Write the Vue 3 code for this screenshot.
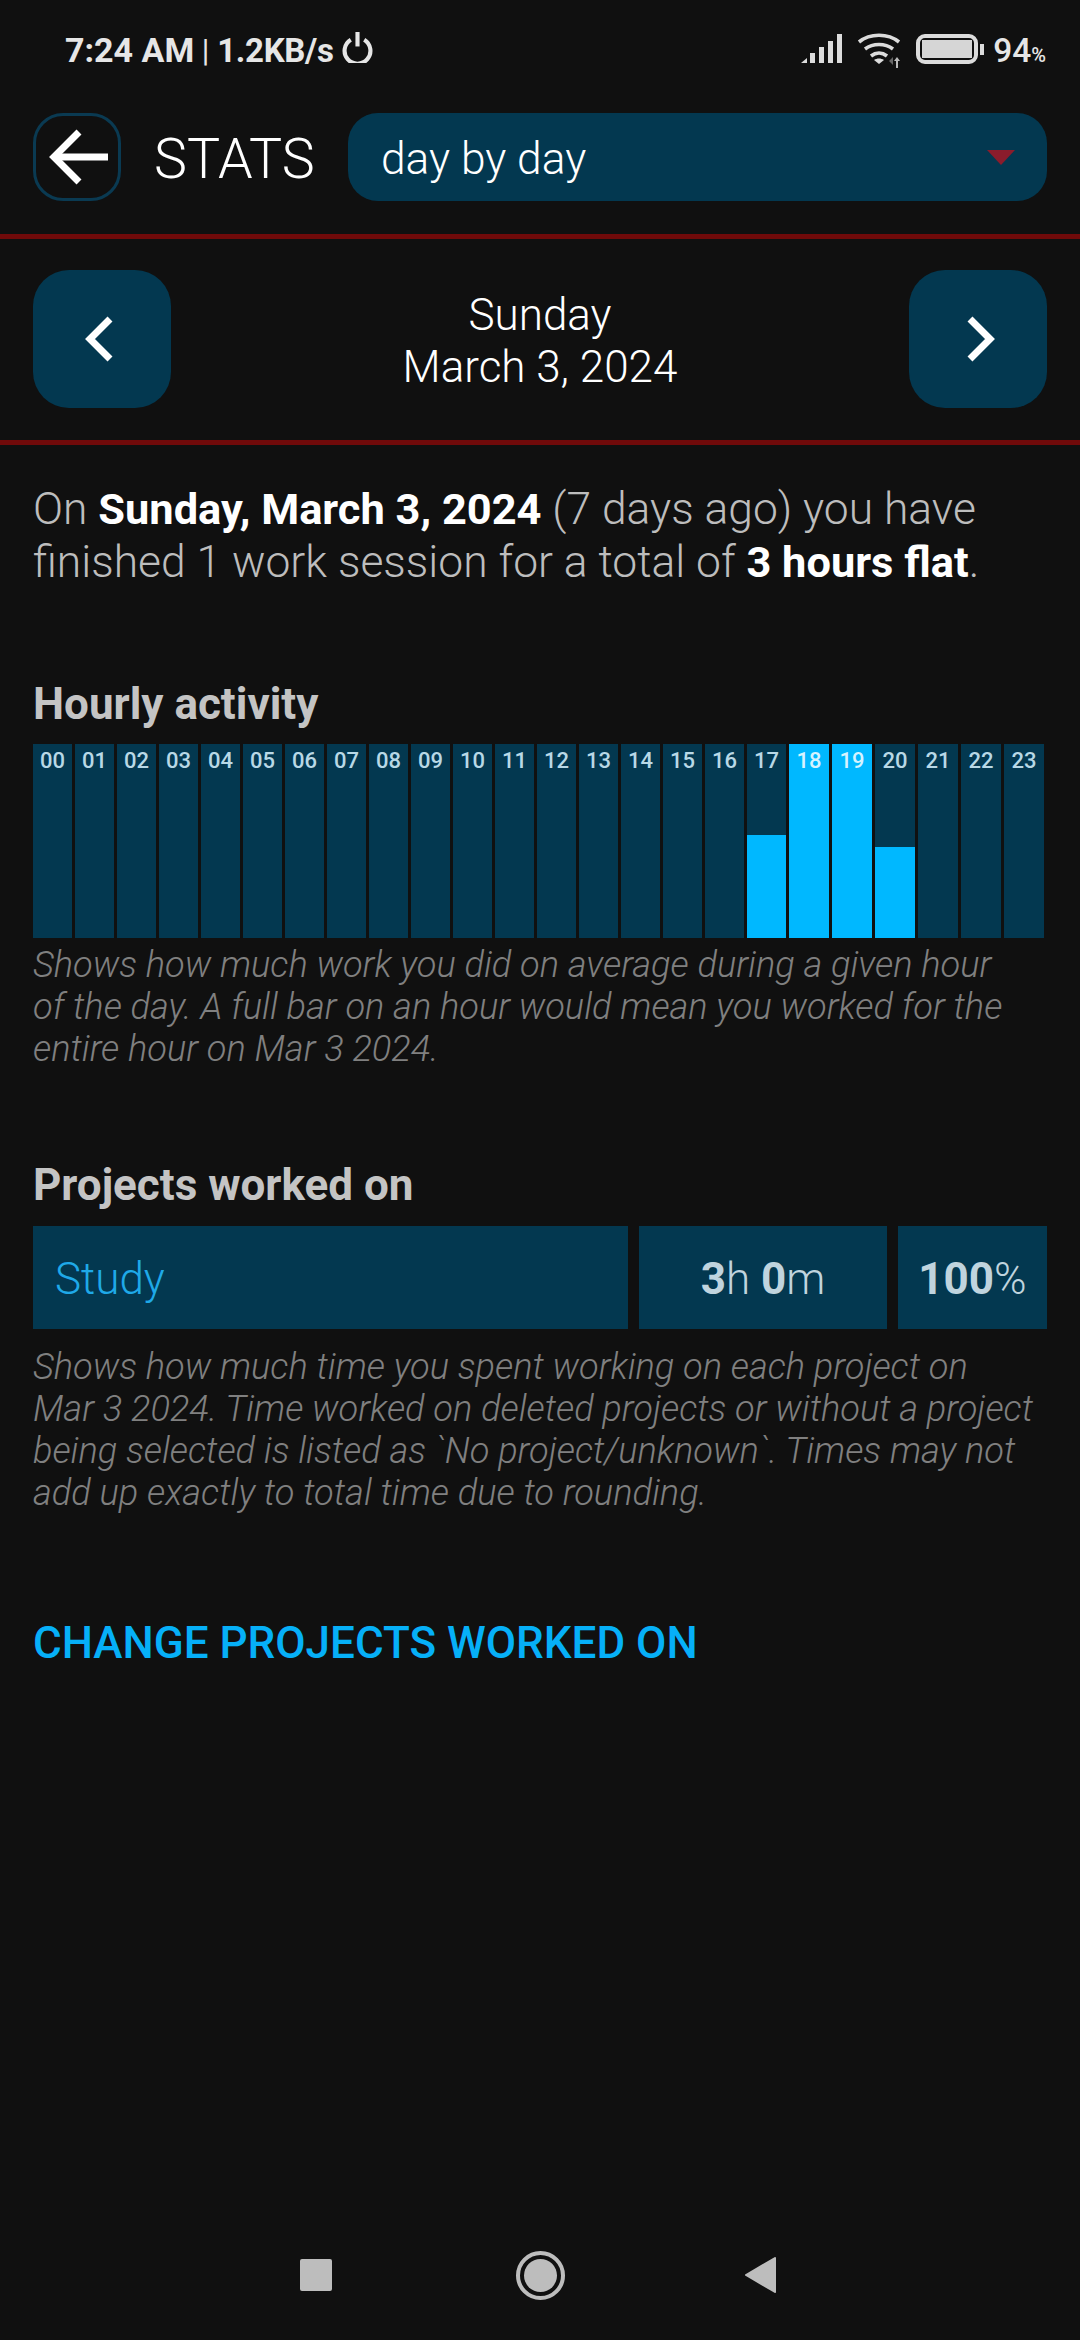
<script setup>
const hours = Array.from({ length: 24 }, (_, i) => ({
  label: String(i).padStart(2, '0'),
  fill: { 17: 53, 18: 100, 19: 100, 20: 47 }[i] || 0,
}))
</script>

<template>
  <div class="screen">
    <div class="status">
      <div class="status-left">
        <span class="clock">7:24 AM</span><span class="sep"> | </span><span class="speed">1.2KB/s</span>
        <svg class="power" viewBox="0 0 30 30" width="31" height="31"><path d="M8.5 7.5a12.5 12.5 0 1 0 13 0" fill="none" stroke="#e6e6e6" stroke-width="4"/><path d="M15 0v14" stroke="#e6e6e6" stroke-width="4"/></svg>
      </div>
      <div class="status-right">
        <svg class="signal" viewBox="0 0 41 30" width="41" height="30" fill="#dcdcdc"><path d="M0 29l6-5v5z"/><rect x="9" y="19" width="5" height="10"/><rect x="18" y="13" width="5" height="16"/><rect x="27" y="7" width="5" height="22"/><rect x="36" y="0" width="5" height="29"/></svg>
        <svg class="wifi" viewBox="0 0 44 36" width="44" height="36" fill="none" stroke="#dcdcdc" stroke-width="3.6">
          <path d="M2 9c11-9 29-9 40 0"/><path d="M8 16c8-6 20-6 28 0"/><path d="M14 23c5-4 11-4 16 0"/>
          <path d="M22 31l-5-4c3-2 7-2 10 0z" fill="#dcdcdc" stroke="none"/>
          <path d="M36 24v8l-4-4z" fill="#666" stroke="none"/>
          <path d="M40 24l3 4h-2v7h-2v-7h-2z" fill="#bbb" stroke="none"/>
        </svg>
        <div class="battery"><div class="battery-fill"></div></div>
        <div class="battery-tip"></div>
        <span class="pct">94<small>%</small></span>
      </div>
    </div>

    <div class="header">
      <button class="back">
        <svg viewBox="0 0 62 62" width="62" height="62" fill="none" stroke="#fff" stroke-width="7"><path d="M62 31H8"/><path d="M33 6L8 31l25 25"/></svg>
      </button>
      <div class="title">STATS</div>
      <div class="select">
        <span class="select-text">day by day</span>
        <svg class="caret" viewBox="0 0 28 15" width="28" height="15"><path d="M0 0h28L14 15z" fill="#8a1c2c"/></svg>
      </div>
    </div>

    <div class="date-nav">
      <button class="nav-btn prev">
        <svg viewBox="0 0 30 48" width="30" height="48" fill="none" stroke="#fff" stroke-width="7"><path d="M26 4L6 24l20 20"/></svg>
      </button>
      <div class="date"><div>Sunday</div><div>March 3, 2024</div></div>
      <button class="nav-btn next">
        <svg viewBox="0 0 30 48" width="30" height="48" fill="none" stroke="#fff" stroke-width="7"><path d="M4 4l20 20L4 44"/></svg>
      </button>
    </div>

    <div class="content">
      <p class="summary">On <b>Sunday, March 3, 2024</b> (7 days ago) you have finished 1 work session for a total of <b>3 hours flat</b>.</p>

      <h2 class="heading first">Hourly activity</h2>
      <div class="chart">
        <div v-for="h in hours" :key="h.label" class="bar">
          <div class="fill" :style="{ height: h.fill + '%' }"></div>
          <span class="bar-label" :class="{ lit: h.fill === 100 }">{{ h.label }}</span>
        </div>
      </div>
      <p class="note note-chart">Shows how much work you did on average during a given hour of the day. A full bar on an hour would mean you worked for the entire hour on Mar 3 2024.</p>

      <h2 class="heading second">Projects worked on</h2>
      <div class="projects">
        <div class="cell name">Study</div>
        <div class="cell time"><b>3</b>h <b>0</b>m</div>
        <div class="cell percent"><b>100</b>%</div>
      </div>
      <p class="note note-projects">Shows how much time you spent working on each project on Mar 3 2024. Time worked on deleted projects or without a project being selected is listed as `No project/unknown`. Times may not add up exactly to total time due to rounding.</p>

      <div class="change">CHANGE PROJECTS WORKED ON</div>
    </div>

    <div class="navbar">
      <div class="nav-square"></div>
      <div class="nav-circle"><div></div></div>
      <svg viewBox="0 0 32 38" width="32" height="38"><path d="M31 2L2 19l29 17z" fill="#bdbdbd" stroke="#bdbdbd" stroke-width="2" stroke-linejoin="round"/></svg>
    </div>
  </div>
</template>

<style>
html, body { margin: 0; background: #101010; }
</style>

<style scoped>
.screen {
  width: 1080px; height: 2340px; background: #101010; color: #fff;
  font-family: Roboto, "Liberation Sans", sans-serif;
  display: flex; flex-direction: column; overflow: hidden;
}
button { border: 0; padding: 0; display: flex; align-items: center; justify-content: center; }

.status { height: 113px; box-sizing: border-box; padding: 30px 35px 0 65px; display: flex; justify-content: space-between; align-items: flex-start; color: #e6e6e6; }
.status-left { display: flex; align-items: center; height: 40px; font-size: 34px; font-weight: 700; white-space: pre; }
.sep { font-weight: 400; font-size: 31px; }
.speed { font-size: 33px; letter-spacing: -0.3px; }
.power { margin-left: 8px; margin-top: -5px; }
.status-right { display: flex; align-items: center; height: 40px; margin-right: -1px; }
.signal { margin-top: -2px; }
.wifi { margin-left: 15px; margin-top: 2px; }
.battery { margin-left: 15px; width: 62px; height: 30px; box-sizing: border-box; border: 4px solid #dcdcdc; border-radius: 9px; padding: 2px; margin-top: -2px; }
.battery-fill { width: 100%; height: 100%; background: #d6d6d6; }
.battery-tip { width: 4px; height: 11px; background: #dcdcdc; margin-left: 2px; margin-top: -2px; }
.pct { margin-left: 9px; font-size: 33.5px; font-weight: 500; color: #e6e6e6; }
.pct small { font-size: 20px; }

.header { height: 126px; box-sizing: border-box; padding: 0 33px; display: flex; align-items: flex-start; border-bottom: 5px solid #700a0a; }
.back { width: 88px; height: 88px; box-sizing: border-box; background: transparent; border: 3px solid #0a3a52; border-radius: 30px; }
.title { width: 227px; box-sizing: border-box; padding-left: 33px; padding-top: 3px; height: 88px; line-height: 88px; font-size: 55.5px; font-weight: 300; }
.select { flex: 1; height: 88px; background: #033850; border-radius: 30px; display: flex; align-items: center; justify-content: space-between; padding: 0 32px 0 33px; font-size: 44.3px; font-weight: 300; }
.select-text { padding-top: 3px; }

.date-nav { height: 206px; box-sizing: border-box; padding: 31px 33px 0; display: flex; justify-content: space-between; align-items: flex-start; border-bottom: 5px solid #700a0a; }
.nav-btn { width: 138px; height: 138px; background: #033850; border-radius: 36px; }
.prev { padding-right: 6px; }
.next { padding-left: 6px; }
.date { text-align: center; font-size: 44px; font-weight: 300; line-height: 52px; padding-top: 19px; }

.content { padding: 0 33px; flex: 1; }
.summary { margin: 38px 0 0; font-size: 44.4px; line-height: 52px; font-weight: 300; color: #bdbdbd; }
.summary b { font-weight: 700; font-size: 43.4px; color: #fff; }
.heading { margin: 0; font-size: 44px; font-weight: 700; color: #c4c4c4; line-height: 48px; }
.heading.first { margin-top: 91px; }
.heading.second { margin-top: 91px; }

.chart { margin-top: 16px; display: grid; grid-template-columns: repeat(18, 39px) repeat(6, 40px); column-gap: 3px; height: 194px; }
.bar { position: relative; background: #033850; }
.fill { position: absolute; left: 0; right: 0; bottom: 0; background: #00b8ff; }
.bar-label { position: absolute; top: 3px; left: 0; right: 0; text-align: center; font-size: 22px; line-height: 28px; font-weight: 500; color: #b8d8e6; }
.bar-label.lit { color: #d5f3ff; }

.note { font-size: 36.2px; line-height: 42px; font-weight: 300; font-style: italic; color: #808080; }
.note-chart { width: 985px; margin: 6px 0 0; }
.note-projects { width: 1003px; margin: 17px 0 0; }

.projects { margin-top: 17px; display: flex; gap: 11px; height: 103px; }
.cell { background: #033850; display: flex; align-items: center; box-sizing: border-box; padding-top: 2px; font-size: 44px; font-weight: 300; white-space: pre; }
.cell b { font-weight: 700; }
.name { width: 595px; padding-left: 22px; color: #1fa9e8; }
.time { width: 248px; justify-content: center; color: #c0d4de; }
.percent { width: 149px; justify-content: center; color: #c0d4de; }

.change { margin-top: 104px; font-size: 44px; font-weight: 500; color: #06b0f8; line-height: 50px; }

.navbar { height: 130px; box-sizing: border-box; display: flex; align-items: center; padding-left: 300px; }
.navbar > * { flex: none; }
.nav-square { width: 32px; height: 32px; background: #bdbdbd; border-radius: 2px; margin-right: 184px; }
.nav-circle { width: 49px; height: 49px; box-sizing: border-box; border: 4px solid #bdbdbd; border-radius: 50%; padding: 4px; margin-right: 179px; }
.nav-circle div { width: 100%; height: 100%; border-radius: 50%; background: #bdbdbd; }
</style>
